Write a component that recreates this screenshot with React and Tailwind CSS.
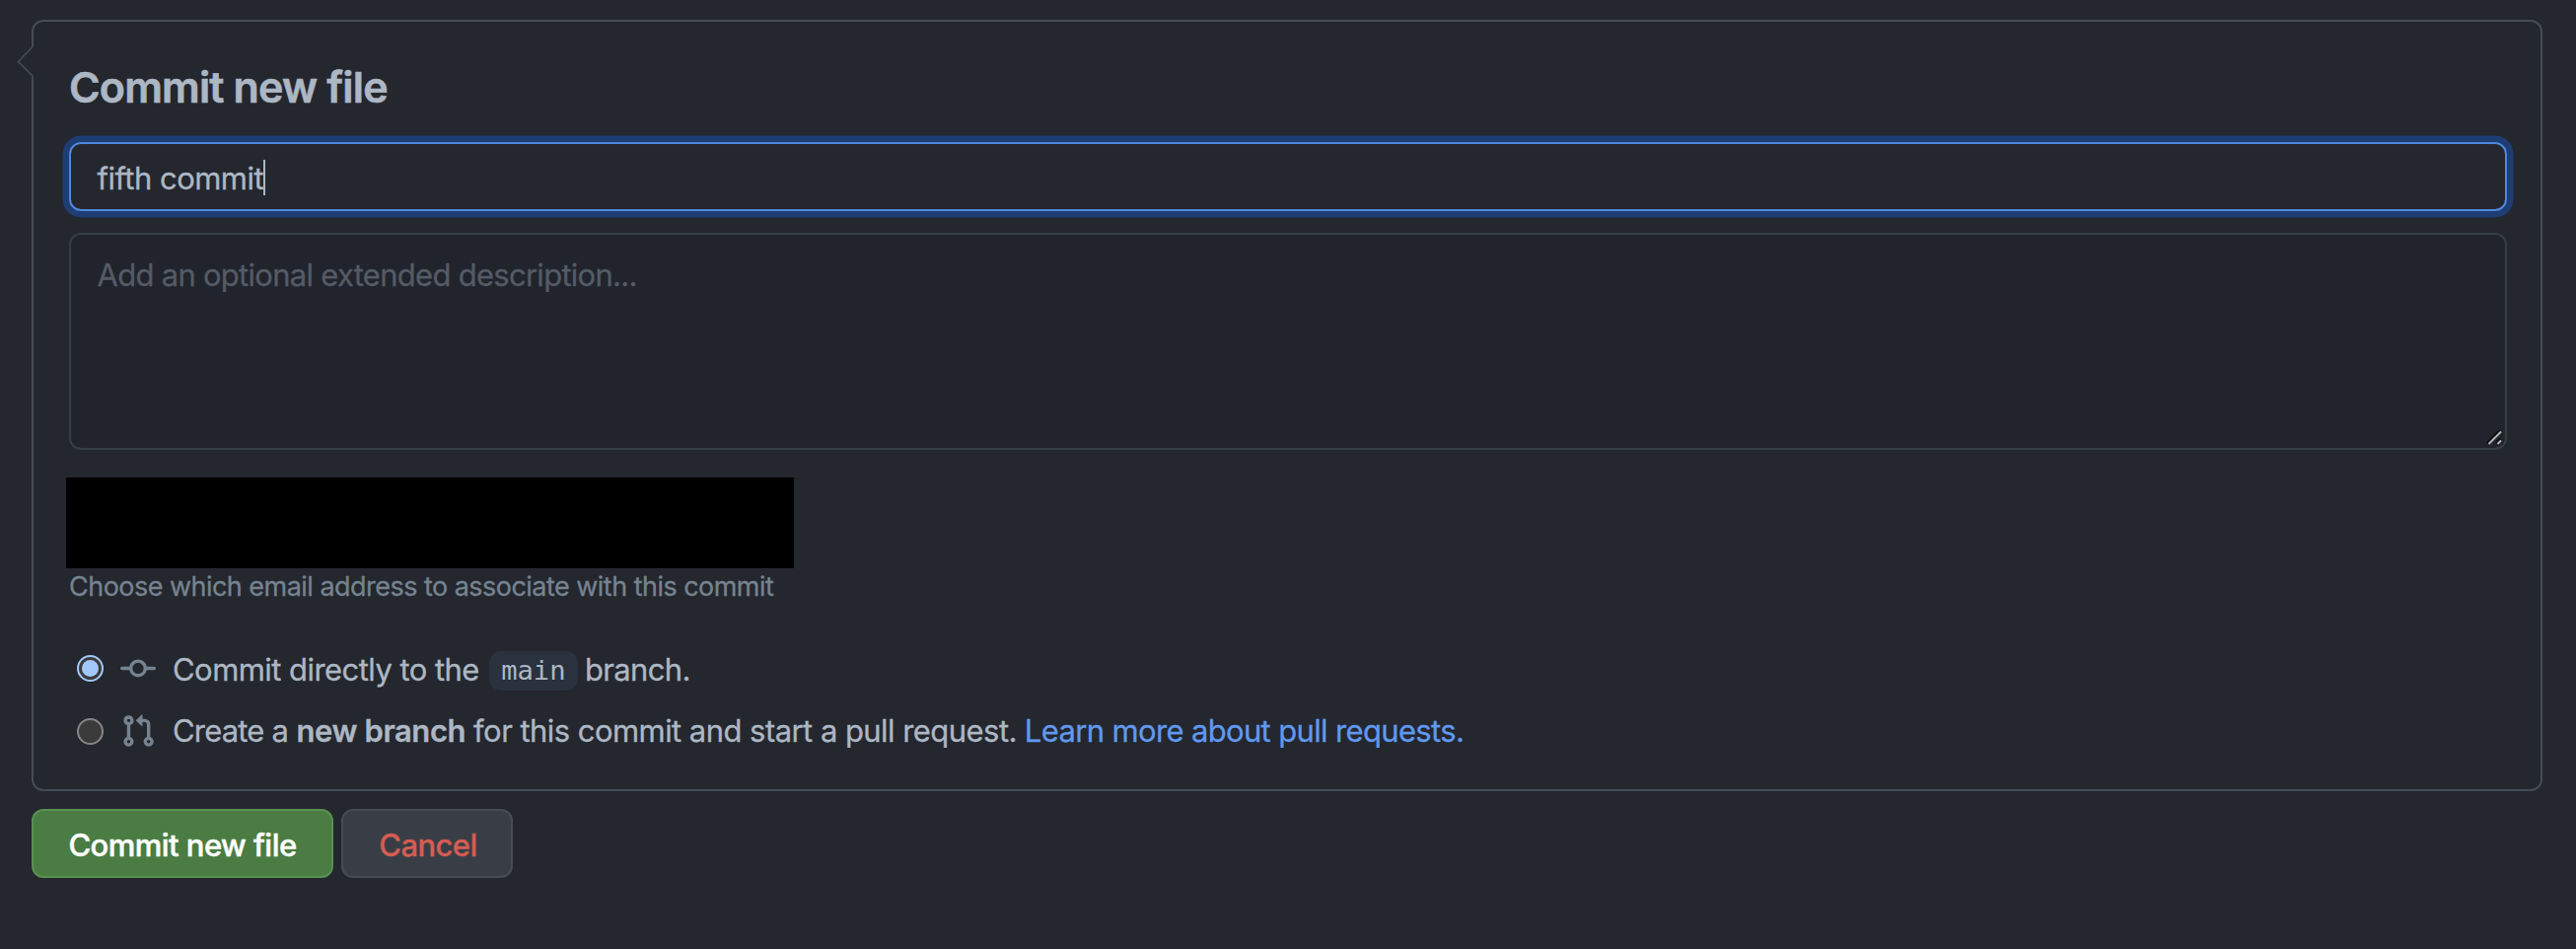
function CommitIcon() {
  return (
    <svg className="block size-9" viewBox="0 0 16 16" fill="#768390">
      <path fillRule="evenodd" d="M10.5 7.75a2.5 2.5 0 11-5 0 2.5 2.5 0 015 0zm1.43.75a4.002 4.002 0 01-7.86 0H.75a.75.75 0 110-1.5h3.32a4.001 4.001 0 017.86 0h3.32a.75.75 0 110 1.5h-3.32z" />
    </svg>
  );
}

function PullRequestIcon() {
  return (
    <svg className="block size-9" viewBox="0 0 16 16" fill="#768390">
      <path fillRule="evenodd" d="M7.177 3.073L9.573.677A.25.25 0 0110 .854v4.792a.25.25 0 01-.427.177L7.177 3.427a.25.25 0 010-.354zM3.75 2.5a.75.75 0 100 1.5.75.75 0 000-1.5zm-2.25.75a2.25 2.25 0 113 2.122v5.256a2.251 2.251 0 11-1.5 0V5.372A2.25 2.25 0 011.5 3.25zM11 2.5h-1V4h1a1 1 0 011 1v5.628a2.251 2.251 0 101.5 0V5A2.5 2.5 0 0011 2.5zm1 10.25a.75.75 0 111.5 0 .75.75 0 01-1.5 0zM3.75 12a.75.75 0 100 1.5.75.75 0 000-1.5z" />
    </svg>
  );
}

function Radio({ checked }) {
  return checked ? (
    <span className="flex size-[27px] items-center justify-center rounded-full border-[2.5px] border-[#a3c8fb] bg-[#3b3b3b]">
      <span className="size-[17px] rounded-full bg-[#a3c8fb]" />
    </span>
  ) : (
    <span className="block size-[27px] rounded-full border-2 border-[#868686] bg-[#3b3b3b]" />
  );
}

export default function App() {
  return (
    <div className="h-[962px] w-[2612px] bg-[#24272e] pt-5 pl-8 font-['Inter',sans-serif] text-[31px] leading-[48px] whitespace-nowrap text-[#adb7c4] [-webkit-text-stroke:0.3px]">
      <section className="relative h-[782px] w-[2546px] rounded-xl border-2 border-[#464c55] pt-[42px] pr-[34px] pl-9">
        <svg className="absolute top-[24px] left-[-17px]" width="18" height="33" viewBox="0 0 18 33" fill="none">
          <path d="M15 1.5h3v30h-3z" fill="#24272e" />
          <path d="M16.5 1L1.5 16.5l15 15" stroke="#464c55" strokeWidth="1.6" />
        </svg>
        <h2 className="h-[80px] text-[43px] font-semibold tracking-[-0.85px] [-webkit-text-stroke:0.6px]">Commit new file</h2>
        <div className="flex h-[70px] items-center rounded-xl border-2 border-[#5088df] pt-[3px] pl-[26.5px] shadow-[0_0_0_6.5px_#1e3d74]">
          <span className="tracking-[-0.52px]">fifth commit</span>
          <span className="mb-[1px] h-9 w-0.5 bg-[#adb7c4]" />
        </div>
        <div className="relative mt-[22px] h-[220px] rounded-xl border-2 border-[#383e46] bg-[#21242c] pt-[17px] pl-[26.5px] tracking-[-0.72px] text-[#545b66]">
          Add an optional extended description...
          <svg className="absolute right-[3px] bottom-[3px]" width="16" height="16" viewBox="0 0 16 16" fill="none">
            <path d="M1 14L14.5 0.5M10 14l4.5-4.5" stroke="#0b0c0f" strokeWidth="2" />
            <path d="M2.5 15L15 2.5M11.5 15l3.5-3.5" stroke="#b4b4b6" strokeWidth="2" />
          </svg>
        </div>
        <div className="mt-[28px] -ml-[3px] h-[92px] w-[738px] bg-black" />
        <p className="-mt-[5px] text-[27px] tracking-[-0.53px] text-[#768390]">Choose which email address to associate with this commit</p>
        <div className="mt-[36px] flex h-[48px] items-center pl-2">
          <div className="mb-[3px] flex items-center gap-[17px]">
            <Radio checked />
            <CommitIcon />
          </div>
          <span className="ml-[17px] tracking-[-0.55px]">Commit directly to the</span>
          <code className="mt-0.5 ml-[10px] flex h-10 w-[90px] items-center justify-center rounded-xl bg-[#29323d] pb-px font-['DejaVu_Sans_Mono',monospace] text-[27.2px] [-webkit-text-stroke:0px]">main</code>
          <span className="ml-[7px] tracking-[-0.65px]">branch.</span>
        </div>
        <div className="mt-[14px] flex h-[48px] items-center pl-2">
          <div className="flex items-center gap-[17px]">
            <Radio />
            <PullRequestIcon />
          </div>
          <span className="ml-[17px] tracking-[-0.82px]">Create a</span>
          <strong className="ml-[8.5px] font-semibold tracking-[-0.43px]">new branch</strong>
          <span className="ml-2 tracking-[-0.55px]">for this commit and start a pull request.</span>
          <a className="ml-2 tracking-[-0.65px] text-[#6099ee]">Learn more about pull requests.</a>
        </div>
      </section>
      <div className="mt-[18px] flex gap-2">
        <button className="h-[70px] w-[306px] rounded-xl border-2 border-[#579150] bg-[#4a7c43] pt-[3px] font-medium tracking-[-0.53px] text-white [-webkit-text-stroke:0.5px]">Commit new file</button>
        <button className="h-[70px] w-[174px] rounded-xl border-2 border-[#464c55] bg-[#393e46] pt-[3px] pl-[2px] font-medium tracking-[-0.6px] text-[#d55d52]">Cancel</button>
      </div>
    </div>
  );
}
